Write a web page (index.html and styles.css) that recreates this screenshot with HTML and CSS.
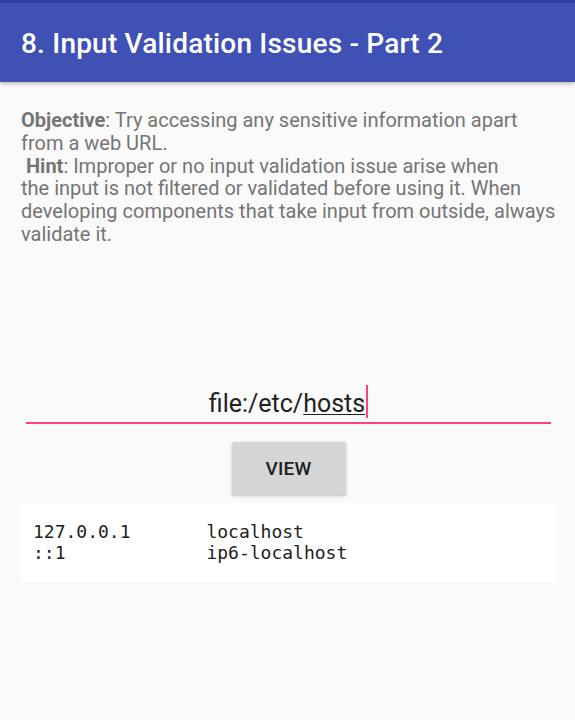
FILE: index.html
```html
<!DOCTYPE html>
<html>
<head>
<meta charset="utf-8">
<link rel="stylesheet" href="styles.css">
</head>
<body>
<div class="status"></div>
<header class="appbar"><h1 class="title">8. Input Validation Issues - Part 2</h1></header>
<main class="content">
  <p class="desc"><b>Objective</b>: Try accessing any sensitive information apart from a web URL.<br>&nbsp;<b>Hint</b>: Improper or no input validation issue arise when<br>the input is not filtered or validated before using it. When developing components that take input from outside, always validate it.</p>
  <div class="field"><span class="value">file:/etc/<u class="compose">hosts</u></span><span class="cursor"></span></div>
  <div class="actions"><button class="btn">VIEW</button></div>
  <pre class="output">127.0.0.1       localhost
::1             ip6-localhost</pre>
</main>
</body>
</html>
```
FILE: styles.css
```css
html, body {
  margin: 0;
  padding: 0;
}
body {
  background: #fafafa;
  font-family: Roboto, "Noto Sans", sans-serif;
  width: 575px;
  height: 720px;
  overflow: hidden;
}
.status {
  height: 3px;
  background: #303f9f;
}
.appbar {
  height: 79px;
  box-sizing: border-box;
  background: #3f51b5;
  padding: 24px 0 0 21px;
  box-shadow: 0 2px 4px rgba(0,0,0,0.25);
  position: relative;
}
.title {
  margin: 0;
  color: #ffffff;
  font-size: 28px;
  line-height: 33px;
  font-weight: 500;
  letter-spacing: 0.2px;
}
.content {
  padding: 27px 0 0 0;
}
.desc {
  margin: 0 12px 0 21px;
  font-size: 20px;
  line-height: 22.8px;
  color: #757575;
}
.desc b {
  font-weight: 700;
}
.field {
  margin: 139px 24px 0 26px;
  text-align: center;
  font-size: 25px;
  line-height: 26px;
  color: #212121;
  padding-bottom: 4px;
  border-bottom: 2px solid #ff4081;
}
.compose {
  text-decoration: underline;
  text-decoration-thickness: 1px;
  text-underline-offset: 2px;
}
.cursor {
  display: inline-block;
  width: 2px;
  height: 33px;
  background: #ff4081;
  vertical-align: -6px;
  margin-left: 1px;
}
.actions {
  display: flex;
  justify-content: center;
  margin: 18px 24px 0 26px;
}
.btn {
  width: 114px;
  height: 53px;
  border: none;
  border-radius: 2px;
  background: #d6d6d6;
  box-shadow: 0 1px 3px rgba(0,0,0,0.25);
  font-family: Roboto, sans-serif;
  font-size: 19px;
  font-weight: 500;
  color: #212121;
  letter-spacing: 0.2px;
  padding: 0;
}
.output {
  margin: 8px 18px 0 21px;
  background: #ffffff;
  padding: 18px 12px 18px 12px;
  font-family: "DejaVu Sans Mono", monospace;
  font-size: 18px;
  line-height: 21.5px;
  color: #212121;
}
```
